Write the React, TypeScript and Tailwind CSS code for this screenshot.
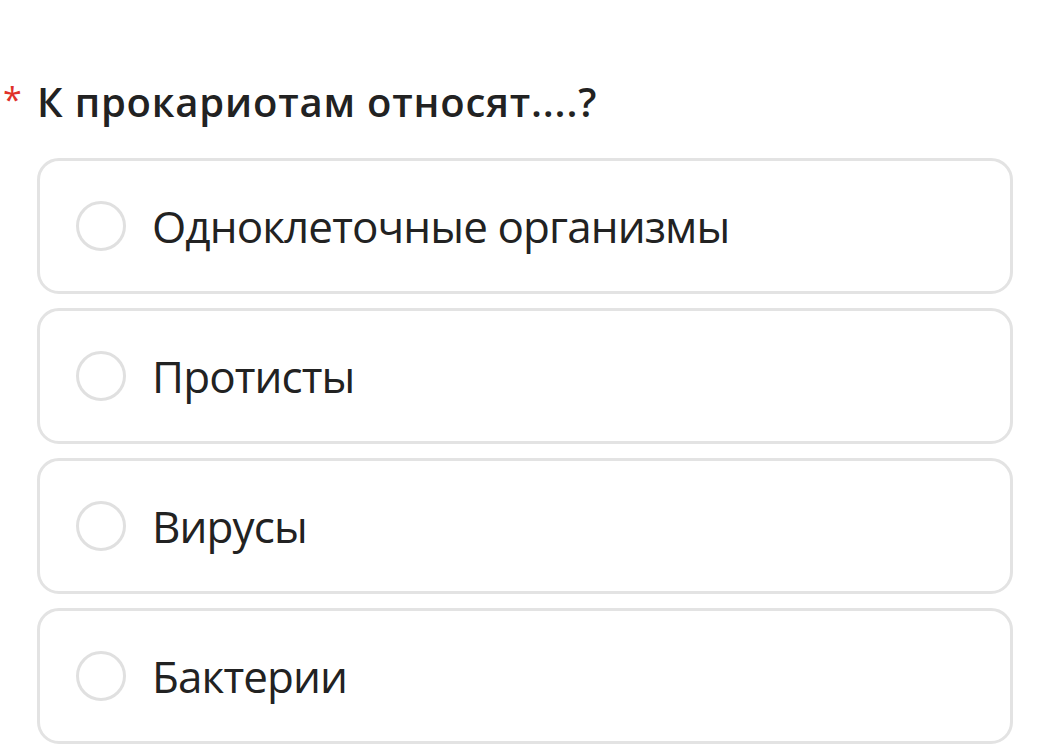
const options = ['Одноклеточные организмы', 'Протисты', 'Вирусы', 'Бактерии'];

function Option({ label }: { label: string }) {
  return (
    <label className="flex h-[136px] cursor-pointer items-center rounded-[22px] border-[3px] border-[#e3e3e3] bg-white pl-[36px]">
      <span className="h-[50px] w-[50px] shrink-0 rounded-full border-[3px] border-[#e0e0e0]" />
      <span className="ml-[26px] text-[44px] leading-none tracking-[-0.9px] text-[#222]">{label}</span>
    </label>
  );
}

export default function App() {
  return (
    <div className="h-[744px] w-[1052px] overflow-hidden bg-white font-['Open_Sans',sans-serif]">
      <div className="flex items-start pt-[82px]">
        <span className="w-[37px] pl-[3px] text-[34px] leading-none text-[#e0312a]">*</span>
        <h2 className="text-[40px] font-semibold leading-none tracking-[0.8px] text-[#222]">К прокариотам относят....?</h2>
      </div>
      <div className="mt-[36px] flex flex-col gap-[14px] pl-[37px] pr-[39px]">
        {options.map((o) => (
          <Option key={o} label={o} />
        ))}
      </div>
    </div>
  );
}
